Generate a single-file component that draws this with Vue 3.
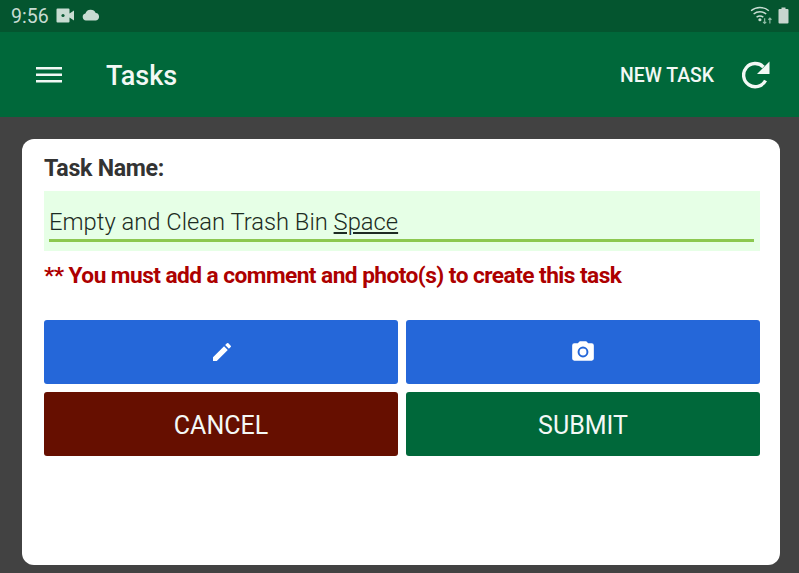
<script setup>
</script>

<template>
  <div class="screen">
    <div class="status">
      <span class="time">9:56</span>
      <svg class="ico-video" width="19" height="15" viewBox="0 0 19 14"><path fill="#c8dcd2" d="M1.500 0h11a1 1 0 0 1 1 1v4l4.500-3v10l-4.500-3v4a1 1 0 0 1-1 1h-11a1 1 0 0 1-1-1V1a1 1 0 0 1 1-1z"/><circle cx="7" cy="7" r="1.600" fill="#0a5a35"/></svg>
      <svg class="ico-cloud" width="18" height="12" viewBox="0 0 18 12"><path fill="#c8dcd2" d="M4 11.500a3.500 3.500 0 0 1-.6-6.900A5.500 5.500 0 0 1 13.700 4 3.800 3.800 0 0 1 14 11.500z"/></svg>
      <span class="spacer"></span>
      <svg class="ico-wifi" width="21" height="18" viewBox="0 0 21 18"><g fill="none" stroke="#c8dcd2" stroke-width="1.400"><path d="M.5 5a13 13 0 0 1 17 0"/><path d="M3 8a9.500 9.500 0 0 1 12 0"/><path d="M5.800 11a5.500 5.500 0 0 1 6.400 0"/></g><circle cx="9" cy="13.500" r="1.500" fill="#c8dcd2"/><path fill="none" stroke="#8fbba5" stroke-width="1.100" d="M13.500 12v5m-1.500-1.500 1.500 1.500 1.500-1.500M18.500 17v-5m-1.500 1.500 1.500-1.500 1.500 1.500"/></svg>
      <svg class="ico-batt" width="11" height="17" viewBox="0 0 11 16"><path fill="#c8d6cf" d="M3.500 0h4v1.500h2a1 1 0 0 1 1 1V15a1 1 0 0 1-1 1h-8a1 1 0 0 1-1-1V2.500a1 1 0 0 1 1-1h2z"/></svg>
    </div>
    <header class="bar">
      <svg class="menu" width="26" height="16" viewBox="0 0 26 16"><path fill="#f2f8f5" d="M0 0h26v2.500H0zM0 6.500h26V9H0zM0 13h26v2.500H0z"/></svg>
      <span class="title">Tasks</span>
      <span class="spacer"></span>
      <span class="new">NEW TASK</span>
      <svg class="refresh" width="28" height="28" viewBox="0 0 28 28"><path fill="none" stroke="#f2f8f5" stroke-width="3.400" d="M23.500 19.500A11.600 11.600 0 1 1 21.500 6"/><path fill="#f2f8f5" d="M27.500 .5v12.500H15z"/></svg>
    </header>
    <main class="main">
      <section class="card">
        <div class="label">Task Name:</div>
        <div class="field">
          <div class="input">Empty and Clean Trash Bin <u>Space</u></div>
        </div>
        <div class="warn">** You must add a comment and photo(s) to create this task</div>
        <div class="grid">
          <button class="btn blue">
            <svg class="pencil" width="24" height="24" viewBox="0 0 24 24"><path fill="#fff" d="M3 17.250V21h3.750L17.810 9.940l-3.750-3.750L3 17.250zM20.710 7.040a1 1 0 0 0 0-1.410l-2.340-2.340a1 1 0 0 0-1.410 0l-1.830 1.830 3.750 3.750 1.830-1.830z"/></svg>
          </button>
          <button class="btn blue">
            <svg class="camera" width="26" height="26" viewBox="0 0 24 24"><circle cx="12" cy="12" r="3.200" fill="#fff"/><path fill="#fff" d="M9 2 7.170 4H4a2 2 0 0 0-2 2v12a2 2 0 0 0 2 2h16a2 2 0 0 0 2-2V6a2 2 0 0 0-2-2h-3.170L15 2H9zm3 15a5 5 0 1 1 0-10 5 5 0 0 1 0 10z"/></svg>
          </button>
          <button class="btn red"><span class="btn-text">CANCEL</span></button>
          <button class="btn green"><span class="btn-text">SUBMIT</span></button>
        </div>
      </section>
    </main>
  </div>
</template>

<style scoped>
.screen {
  width: 799px;
  height: 573px;
  display: flex;
  flex-direction: column;
  overflow: hidden;
  background: #424242;
  font-family: Roboto, "Liberation Sans", sans-serif;
}
.status {
  height: 32px;
  flex: none;
  display: flex;
  align-items: center;
  padding: 0 10px 0 11px;
  box-sizing: border-box;
  background: #04552f;
  color: #c8dcd2;
}
.time { font-size: 19.500px; margin-right: 8px; }
.ico-video { margin-right: 7px; margin-bottom: 1px; margin-left: -1px; }
.ico-cloud { margin-bottom: 3px; }
.spacer { flex: 1; }
.ico-wifi { margin-right: 6px; margin-bottom: 2px; transform: scale(1.050); }
.ico-batt { margin-bottom: 1px; }
.bar {
  height: 85px;
  flex: none;
  display: flex;
  align-items: center;
  padding: 0 29px 0 36px;
  box-sizing: border-box;
  background: #00683a;
  color: #f2f8f5;
}
.title { font-size: 27px; font-weight: 500; margin-left: 44px; margin-top: 3px; }
.new { font-size: 19.400px; font-weight: 500; margin-right: 28px; margin-top: 1px; }
.refresh { margin-top: 1px; }
.main {
  flex: 1;
  padding: 22px 19px 8px 22px;
  min-height: 0;
  display: flex;
}
.card {
  flex: 1;
  background: #fff;
  border-radius: 12px;
  padding: 15px 20px 0 22px;
}
.label {
  font-size: 23.200px;
  font-weight: 700;
  line-height: 28px;
  color: #333;
  letter-spacing: -0.3px;
}
.field {
  margin-top: 9px;
  height: 60px;
  box-sizing: border-box;
  background: #e6ffe6;
  padding: 0 6px 0 5px;
}
.input {
  height: 51px;
  box-sizing: border-box;
  border-bottom: 3px solid #8cc850;
  font-size: 23.760px;
  font-weight: 300;
  line-height: 62px;
  overflow: hidden;
  color: #1c2b22;
}
.warn {
  margin-top: 11px;
  font-size: 22.700px;
  font-weight: 700;
  line-height: 28px;
  color: #ad0000;
  letter-spacing: -0.55px;
  white-space: nowrap;
}
.grid {
  margin-top: 30px;
  display: grid;
  grid-template-columns: 1fr 1fr;
  grid-auto-rows: 64px;
  gap: 8px;
}
.btn {
  border: 0;
  border-radius: 3px;
  padding: 0;
  display: flex;
  align-items: center;
  justify-content: center;
  color: #f4f8f6;
  font-family: inherit;
  font-size: 25px;
  font-weight: 400;
}
.btn-text { margin-top: 2px; }
.pencil { margin: 0 0 1px 1px; }
.blue { background: #2567d9; }
.red { background: #660f00; }
.green { background: #00683a; }
</style>
